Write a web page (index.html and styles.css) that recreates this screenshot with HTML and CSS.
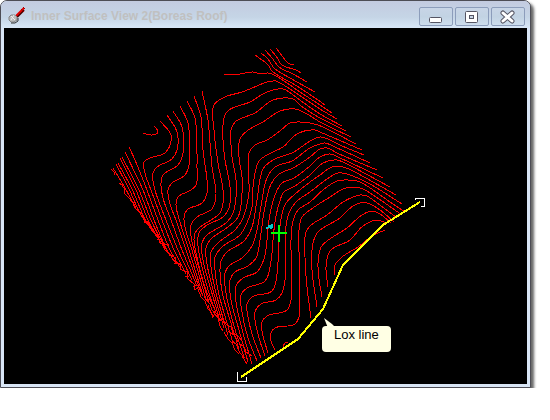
FILE: index.html
```html
<!DOCTYPE html>
<html lang="en">
<head>
  <meta charset="UTF-8">
  <title>Inner Surface View 2(Boreas Roof)</title>
  <link rel="stylesheet" href="styles.css">
</head>
<body>

  <div class="window">
    <header class="titlebar">
      <svg class="app-icon" viewBox="0 0 18 18" aria-hidden="true">
        <path d="M9 10L16 3" stroke="#400" stroke-width="2"/>
        <path d="M8 9L16 1" stroke="#e00000" stroke-width="2"/>
        <path d="M13 2l3 3M15 0l2 2" stroke="#a00" stroke-width="1"/>
        <path d="M1 10l2-2h4l2 2v3l-3 2H3l-2-2z" fill="#bdbdbd" stroke="#858585"/>
        <path d="M3 9l4 4M6 8l-3 5" stroke="#eee"/>
        <path d="M10 11v3l-3 2H3" fill="none" stroke="#333"/>
      </svg>
      <h1>Inner Surface View 2(Boreas Roof)</h1>
      <div class="buttons">
        <button type="button" aria-label="Minimize">
          <svg viewBox="0 0 32 17"><rect x="9.500" y="9.500" width="12" height="5" rx="1" fill="#fff" stroke="#555563"/></svg>
        </button>
        <button type="button" aria-label="Maximize">
          <svg viewBox="0 0 32 17"><rect x="9.500" y="3.500" width="12" height="11" rx="1" fill="#fff" stroke="#555563"/><rect x="13.500" y="7.500" width="4" height="3" fill="#c8d6e6" stroke="#555563"/></svg>
        </button>
        <button type="button" aria-label="Close">
          <svg viewBox="0 0 32 17"><path d="M11 5l9 8M20 5l-9 8" stroke="#555563" stroke-width="5" stroke-linecap="round"/><path d="M11 5l9 8M20 5l-9 8" stroke="#fff" stroke-width="3" stroke-linecap="round"/></svg>
        </button>
      </div>
    </header>

    <main class="view">
      <svg class="surface" viewBox="4 28 523 356" role="img" aria-label="Surface contours with lox line">
        <g class="contour" id="contours"></g>

        <!-- ragged lower left edge -->
        <g class="contour">
          <path d="M119 183L122 185L125 190L124 193L129 198L133 203L135 208L142 214L145 222L148 221L152 231L158 236L160 243L165 244L164 249L172 256L176 258L175 262L181 265L180 269L187 272L188 279L194 284L195 290L199 287L202 294"/>
          <path d="M144 222l5 0M157 240l6 -1M164 245l5 -1M172 260l4 -2M174 263l6 1M185 276l4 1M193 287l4 -2l2 2"/>
          <path d="M198 289l3 8l4 4l3 8l3 3l3 5M204 297l6 7l2 6l5 4l2 5l6 4M208 305l5 13M213 312l5 6l2 8l3 5"/>
          <path d="M222 318l4 6l5 3l2 6l6 4l3 4M224 332l4 7l4 4l3 7l4 4M232 341l4 3l4 9l5 5M228 331l6 4l4 7M239 343l5 4l2 5l6 4M242 356l5 8"/>
        </g>

        <!-- seed point -->
        <path class="seed" d="M268 225h3v-1h2v4h-1v1h-2v-1h-2v1h-2v-2h2z"/>
        <path class="cross" d="M279 225v17M271 233h16"/>

        <polyline class="lox" points="241,377 298,339 323,309 343,265 383,225 420,202"/>
        <path class="handle" d="M415 200V198H424V206H421"/>
        <path class="handle" d="M238 372H237V381H246V377"/>
      </svg>

      <div class="callout">
        <svg class="tail" viewBox="0 0 14 10" aria-hidden="true"><path d="M2 0l4 10h8l-4-4z"/></svg>
        Lox line
      </div>
    </main>
  </div>

  <script>
    // one contour per string, as x,y pairs
    const contours = [
      // upper right corner
      '276,48 283,57 288,63 294,65',
      '270,49 276,56 282,65 296,70 301,73',
      '265,50 272,58 279,67 293,74 307,82',
      '261,53 268,59 274,68 290,78 315,92',
      '255,55 269,66 271,70 297,86 318,100 325,105',
      '224,75 240,74 253,72 261,74 268,73 276,76 300,92 320,105 332,113',

      // right edge to lower left
      '337,119 320,109 287,87 280,83 276,81 267,82 257,86 242,92 225,97 214,105 214,130 218,163 223,190 223,203 220,213 211,220 200,227 195,233 194,240 196,253 206,290 213,306',
      '342,126 320,114 297,98 289,92 283,89 267,92 250,102 229,110 225,115 223,125 223,140 225,160 230,187 229,208 223,217 207,225 199,233 198,246 200,258 208,290 216,313',
      '346,131 320,118 300,105 295,100 288,98 273,100 255,113 235,122 231,130 231,145 232,157 236,180 236,197 233,213 227,222 206,236 202,243 203,260 211,290 220,321',
      '351,137 320,122 307,114 295,109 280,111 263,122 247,131 240,139 239,157 242,177 242,193 238,217 228,227 210,240 206,248 207,264 213,290 224,328',
      '356,144 318,125 300,122 290,123 280,131 267,140 255,145 249,153 249,192 243,218 235,230 219,242 211,252 211,267 216,293 228,335',
      '362,150 320,132 315,130 297,134 283,147 267,155 259,161 253,187 252,207 247,223 240,235 222,247 215,257 215,270 219,295 233,343',
      '364,155 340,145 328,139 320,137 310,141 294,152 273,160 263,169 257,200 252,227 244,241 227,252 221,261 220,272 223,296 239,349',
      '370,163 335,147 325,143 320,144 310,148 292,161 275,167 267,178 262,200 257,230 252,246 242,258 229,266 225,273 226,293 234,326 244,357',
      '377,170 337,153 327,148 320,149 310,157 293,168 279,174 271,184 264,212 260,240 256,258 248,266 235,272 230,280 231,300 239,330 248,362',
      '383,178 340,158 330,154 320,157 310,166 294,178 282,183 275,195 269,220 267,240 264,259 257,272 243,278 236,286 236,302 243,333 252,364',
      '390,187 345,163 337,160 323,163 310,175 295,186 284,192 279,204 275,222 273,240 271,261 265,281 247,288 241,295 242,312 248,338 257,361',
      '396,195 353,171 343,167 332,167 320,175 310,182 294,195 286,203 281,219 279,240 277,274 272,291 252,297 247,304 248,317 253,337 261,358',
      '402,204 370,184 347,174 338,173 327,179 310,192 296,202 289,213 286,226 285,280 282,293 276,300 261,304 255,312 255,320 259,338 265,356',
      '405,212 390,202 360,182 348,180 337,181 323,190 310,202 298,210 293,221 291,240 291,300 287,310 267,316 262,322 262,331 268,353',
      '402,215 363,189 353,187 343,189 330,197 310,210 302,217 299,230 299,317 295,324 275,328 271,333 271,341 275,350',
      '397,218 373,200 367,196 360,195 353,197 343,202 327,215 310,226 306,232 305,257 307,287 311,318',
      '394,222 380,210 367,203 360,203 353,206 340,218 318,232 313,243 312,270 317,307',
      '391,223 380,214 372,211 362,215 347,228 327,241 321,247 318,263 319,279 322,297',
      '386,223 377,220 363,226 350,240 330,251 326,267 328,287',
      '385,230 372,236 358,247 342,257 335,265 334,275',
      '283,347 285,343 288,342',

      // upper left corner
      '154,126 158,132 152,135 143,133',
      '160,121 171,135 170,145 165,153 150,158 144,162 145,173 151,190 162,220 174,250 186,274',
      '167,115 177,132 177,150 172,159 157,167 153,173 155,190 166,220 178,250 192,280',
      '173,111 182,127 183,153 178,165 163,175 161,183 163,198 171,220 182,250 197,286',
      '180,106 188,123 189,165 185,175 172,183 168,190 170,204 176,220 186,250 200,290',
      '187,101 195,118 197,167 196,185 191,190 178,197 176,204 180,222 189,250 203,296',
      '194,96 201,117 203,150 207,180 207,193 202,203 187,210 184,218 186,231 192,250 206,300',
      '202,91 208,120 212,167 216,193 215,202 212,209 197,217 191,225 191,236 194,250 209,303',

      // left edge
      '129,147 135,160 147,190 158,220 170,250 181,269',
      '125,152 143,190 154,220 167,250 175,262',
      '122,157 139,190 151,220 163,244 170,256',
      '120,158 136,190 148,220 158,238 165,249',
      '118,163 132,189 145,219 157,237',
      '116,164 129,189 141,215 151,229',
      '113,168 125,188 136,208',
      '111,169 114,172 114,175',
    ];

    // bends each point toward its neighbours so the line reads as a curve
    function smooth(text) {
      const p = text.split(' ').map(s => s.split(',').map(Number));
      const tangent = p.map((_, i) => {
        const a = p[Math.max(i - 1, 0)];
        const b = p[Math.min(i + 1, p.length - 1)];
        const c = p[i];
        const la = Math.hypot(c[0] - a[0], c[1] - a[1]) || 1;
        const lb = Math.hypot(b[0] - c[0], b[1] - c[1]) || 1;
        const x = (c[0] - a[0]) / la + (b[0] - c[0]) / lb;
        const y = (c[1] - a[1]) / la + (b[1] - c[1]) / lb;
        const l = Math.hypot(x, y) || 1;
        return [x / l, y / l];
      });
      let d = `M${p[0]}`;
      for (let i = 1; i < p.length; i++) {
        const [a, b] = [p[i - 1], p[i]];
        const len = Math.min(Math.hypot(b[0] - a[0], b[1] - a[1]) / 3, 8);
        const c1 = [a[0] + tangent[i - 1][0] * len, a[1] + tangent[i - 1][1] * len];
        const c2 = [b[0] - tangent[i][0] * len, b[1] - tangent[i][1] * len];
        d += `C${c1} ${c2} ${b}`;
      }
      return d;
    }

    document.getElementById('contours').innerHTML =
      contours.map(c => `<path d="${smooth(c)}"/>`).join('');
  </script>
</body>
</html>
```
FILE: styles.css
```css
* {
  box-sizing: border-box;
}

body {
  margin: 0;
  background: #fff;
  font-family: "Liberation Sans", Arial, sans-serif;
}

.window {
  margin-right: 19px;
  padding: 0 3px 3px;
  border: 1px solid #4d4d55;
  border-radius: 7px 7px 0 0;
  background: #d9e6f6;
  box-shadow: 3px 3px 3px rgba(0, 0, 0, 0.6);
}

.titlebar {
  display: flex;
  align-items: center;
  height: 27px;
  margin: 0 -3px;
  padding: 3px 5px 0 7px;
  border-radius: 6px 6px 0 0;
  background: linear-gradient(#c3cbe0, #c5d5e6 60%, #d8e7f7);
}

.app-icon {
  width: 18px;
  height: 18px;
}

.titlebar h1 {
  flex: 1;
  margin: 0 0 0 5px;
  font-size: 12px;
  line-height: 16px;
  color: #c0c0c0;
  white-space: nowrap;
}

.buttons {
  display: flex;
  gap: 2px;
}

.buttons button {
  width: 34px;
  height: 19px;
  padding: 0;
  border: 1px solid #8c9dbb;
  border-radius: 2px;
  background: linear-gradient(#c8d5e7, #c2d3e3 50%, #cddded);
}

.buttons svg {
  display: block;
  width: 32px;
  height: 17px;
}

.view {
  position: relative;
  background: #000;
}

.surface {
  display: block;
  width: 100%;
  fill: none;
  shape-rendering: crispEdges;
}

.contour {
  stroke: #f00;
  stroke-width: 1;
}

.seed {
  fill: #0cc;
}

.cross {
  stroke: #0f0;
  stroke-width: 2;
}

.lox {
  stroke: #ff0;
  stroke-width: 2;
}

.handle {
  stroke: #fff;
  stroke-width: 1;
}

.callout {
  position: absolute;
  left: 318px;
  top: 298px;
  padding: 0 12px 8px;
  border-radius: 4px;
  background: #ffffe4;
  color: #000;
  font-size: 13px;
  line-height: 18px;
  white-space: nowrap;
}

.tail {
  position: absolute;
  left: 0;
  top: -8px;
  width: 14px;
  height: 10px;
  fill: #ffffe4;
}
```
